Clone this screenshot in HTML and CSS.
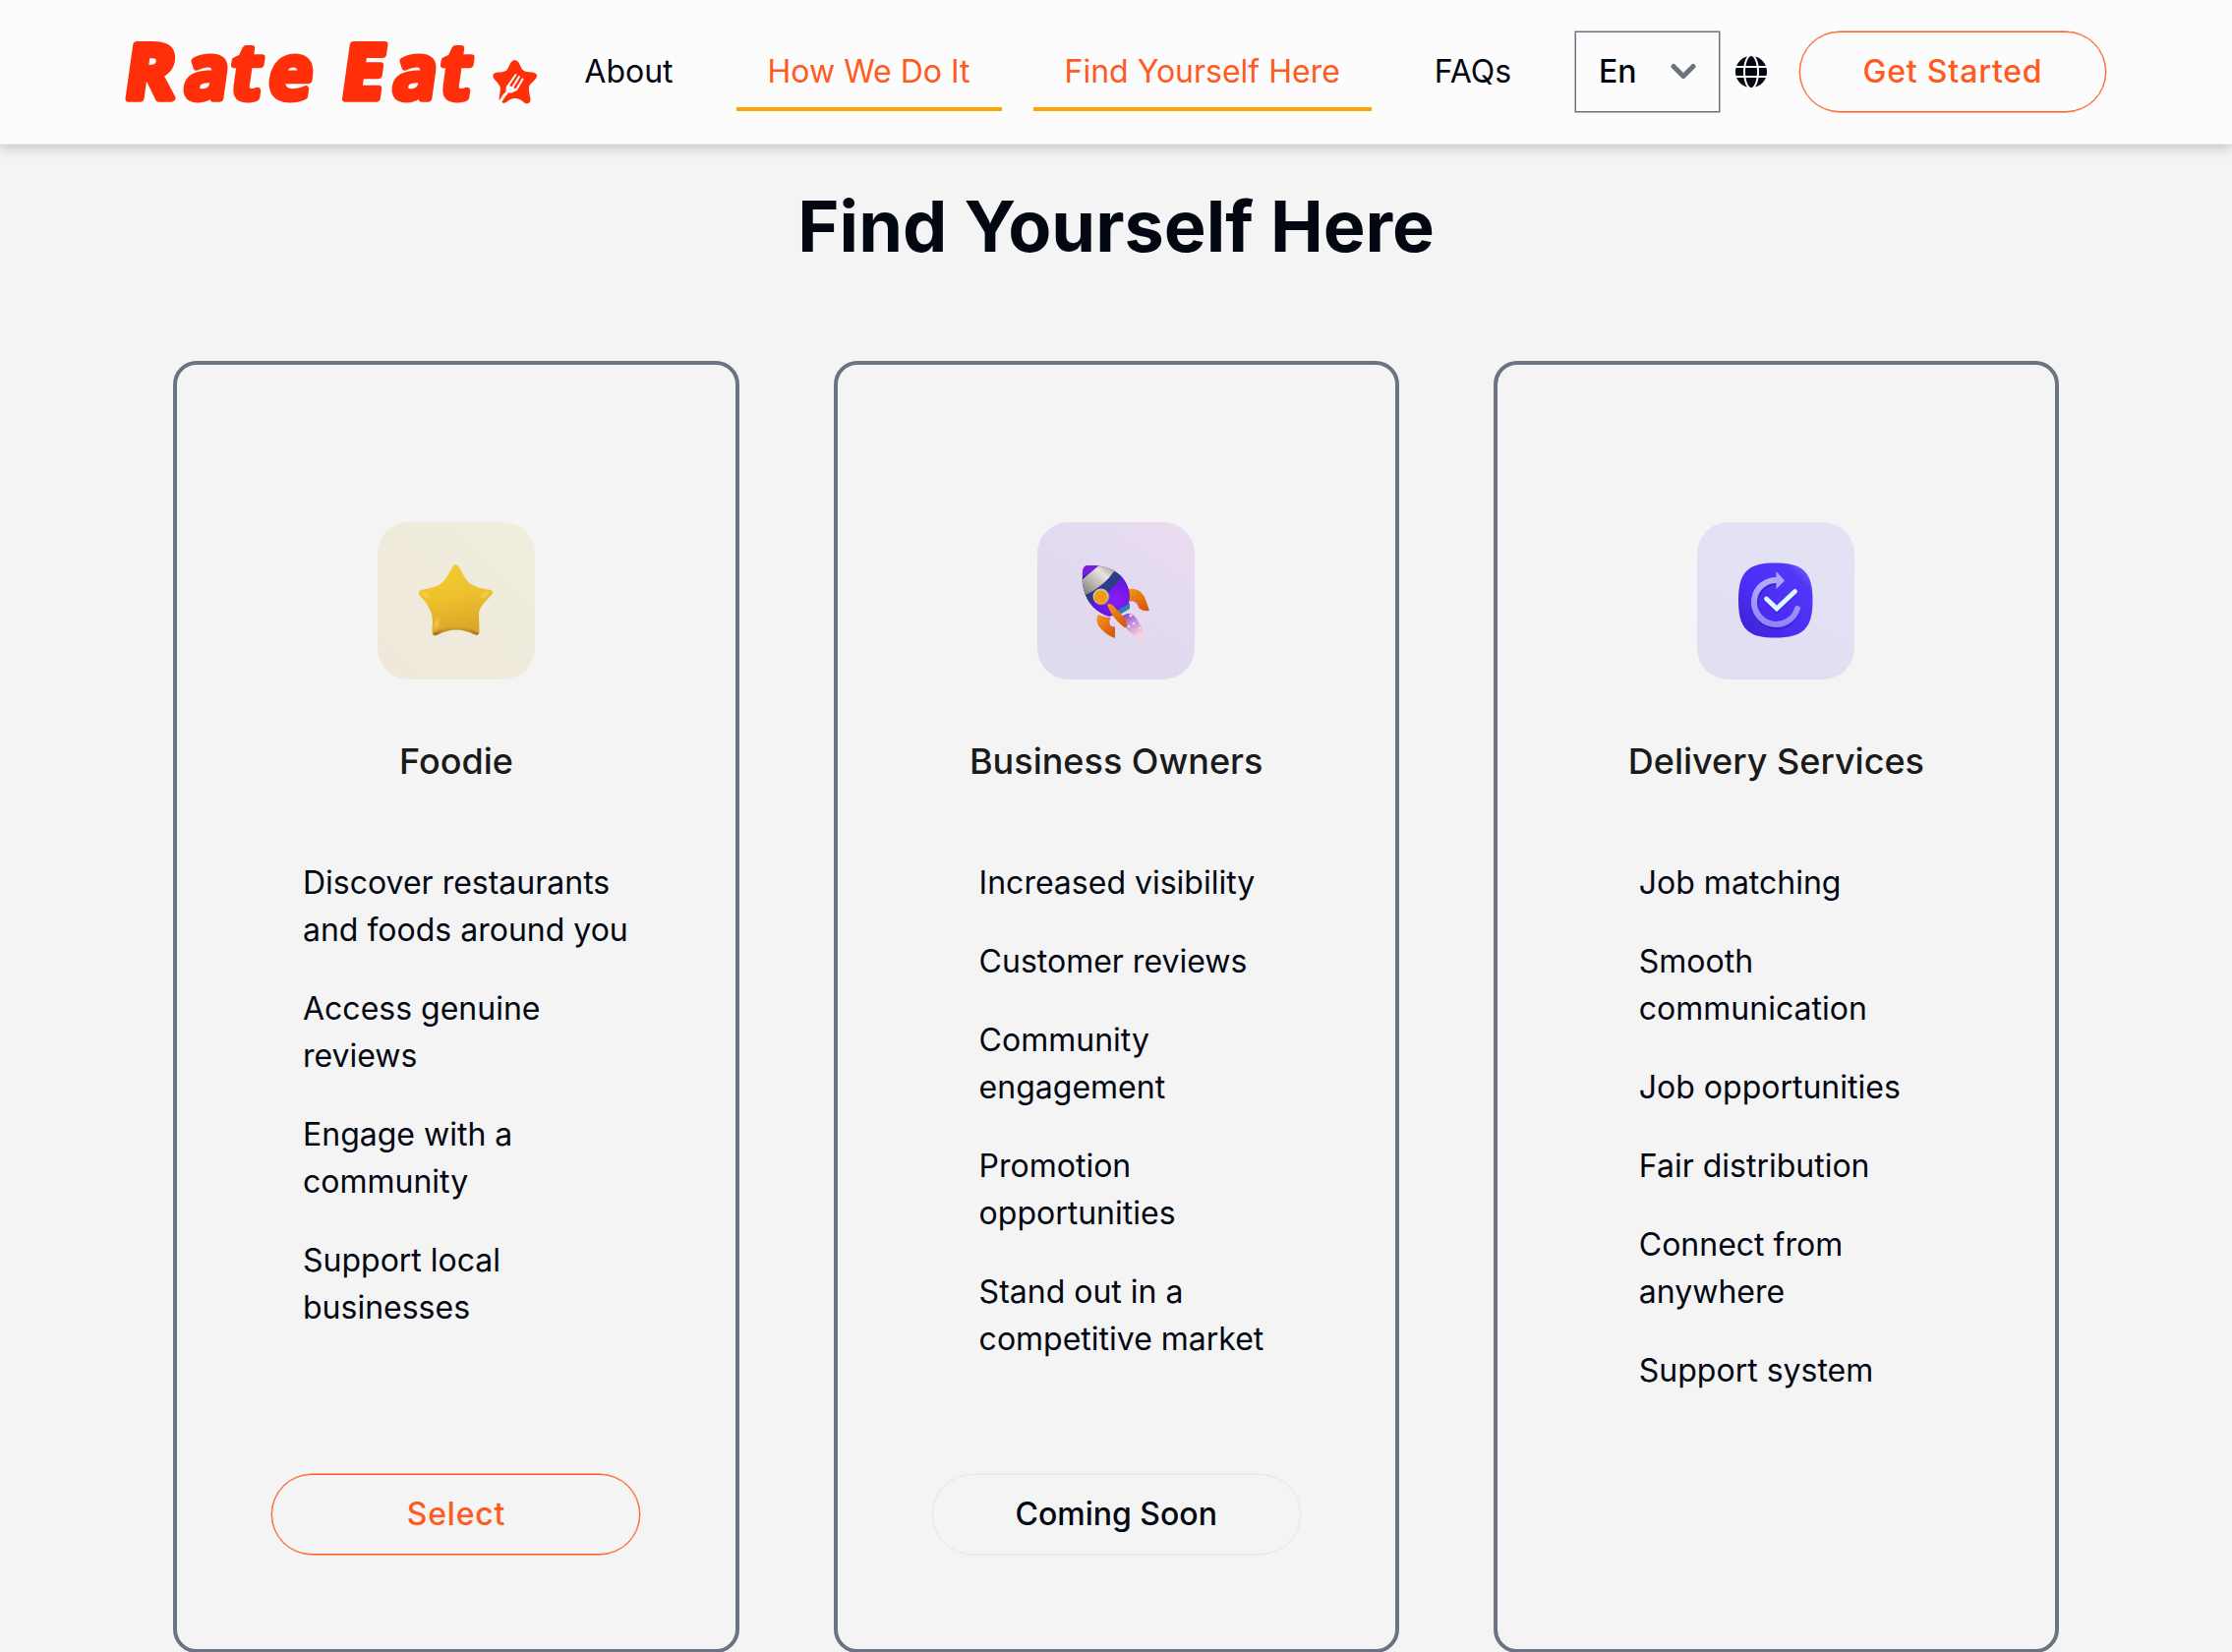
FILE: index.html
```html
<!DOCTYPE html>
<html lang="en">
<head>
<meta charset="utf-8">
<title>Rate Eat</title>
<link rel="stylesheet" href="styles.css">
</head>
<body>
<header class="header">
  <svg class="logo" width="426" height="120" viewBox="0 -15.500 426 120" role="img" aria-label="Rate Eat">
    <g class="logo-word">
      <text transform="translate(0 71) skewX(-8)" x="1.500 62.500 109.500 148"><tspan class="logo-cap">R</tspan>ate</text>
      <text transform="translate(0 71) skewX(-8)" x="222 274.500 322.500"><tspan class="logo-cap">E</tspan>at</text>
    </g>
    <path class="logo-star" d="M396.500 35 Q400.500 30 404.500 35 L408 42 Q410 45 418 45 Q426 46.500 421.500 52 L416 57.500 Q413.500 60 416.500 72 Q416.500 78 411 76.500 Q401 67 392 75.500 L389 76.500 L384.500 73 L386 61 Q385 57 380 52.500 Q375.500 46 383 45 Q391 45 393 42Z"/>
    <g class="logo-fork">
      <path d="M401.500 47.500 L393 60 M405 49.500 L398.500 60 M408.500 52 L402 63"/>
      <path class="fork-stem" d="M394 62 Q393 66 389.500 69 L385.500 75.500"/>
      <path class="fork-head" d="M393 57.500 Q390 63 393 65.500 Q399 67 403 62.500Z"/>
    </g>
  </svg>
  <nav class="nav">
    <a class="nav-link">About</a>
    <a class="nav-link active">How We Do It</a>
    <a class="nav-link active">Find Yourself Here</a>
    <a class="nav-link">FAQs</a>
  </nav>
  <div class="lang">
    <span>En</span>
    <svg width="26" height="18" viewBox="0 0 26 18"><path d="M3 3.500 L13 13.500 L23 3.500" fill="none" stroke="#6b7280" stroke-width="5" stroke-linecap="round" stroke-linejoin="round"/></svg>
  </div>
  <svg class="globe" width="32" height="32" viewBox="0 0 512 512"><path fill="#030712" d="M352 256c0 22.200-1.200 43.600-3.300 64H163.300c-2.200-20.400-3.300-41.800-3.300-64s1.200-43.600 3.300-64H348.700c2.200 20.400 3.300 41.800 3.300 64zm28.800-64H503.900c5.300 20.500 8.100 41.900 8.100 64s-2.800 43.500-8.100 64H380.800c2.100-20.600 3.200-42 3.200-64s-1.100-43.400-3.200-64zm112.600-32H376.700c-10-63.900-29.800-117.400-55.300-151.600c78.300 20.700 142 77.500 171.900 151.600zm-149.100 0H167.700c6.100-36.400 15.500-68.600 27-94.700c10.500-23.600 22.200-40.700 33.500-51.500C239.400 3.200 248.700 0 256 0s16.600 3.200 27.800 13.800c11.300 10.800 23 27.900 33.500 51.500c11.600 26 20.900 58.200 27 94.700zm-209 0H18.600C48.600 85.900 112.200 29.100 190.600 8.400C165.100 42.600 145.300 96.100 135.300 160zM8.100 192H131.200c-2.100 20.600-3.200 42-3.200 64s1.100 43.400 3.200 64H8.100C2.800 299.500 0 278.100 0 256s2.800-43.500 8.100-64zM194.700 446.600c-11.600-26-20.900-58.200-27-94.600H344.300c-6.100 36.400-15.500 68.600-27 94.600c-10.500 23.600-22.200 40.700-33.500 51.500C272.600 508.800 263.300 512 256 512s-16.600-3.200-27.800-13.800c-11.300-10.800-23-27.900-33.500-51.500zM135.300 352c10 63.900 29.800 117.400 55.300 151.600C112.200 482.900 48.600 426.100 18.600 352H135.300zm358.100 0c-30 74.100-93.600 130.900-171.900 151.600c25.500-34.200 45.200-87.700 55.300-151.600H493.400z"/></svg>
  <button class="btn btn-start">Get Started</button>
</header>

<main class="main">
  <h1 class="heading">Find Yourself Here</h1>
  <div class="cards">
    <section class="card">
      <div class="tile tile-star">
        <svg width="160" height="160" viewBox="0 0 160 160">
          <defs>
            <linearGradient id="gold" x1="0" y1="0" x2="0.200" y2="1"><stop offset="0" stop-color="#f5cd35"/><stop offset=".55" stop-color="#edbf2d"/><stop offset="1" stop-color="#d9a728"/></linearGradient>
            <radialGradient id="gleam"><stop offset="0" stop-color="#fbe07c" stop-opacity=".6"/><stop offset="1" stop-color="#f3c836" stop-opacity="0"/></radialGradient>
            <linearGradient id="underside" x1="0" y1="0" x2="0" y2="1"><stop offset="0" stop-color="#a87116" stop-opacity="0"/><stop offset="1" stop-color="#8b5a12" stop-opacity=".8"/></linearGradient>
          </defs>
          <path d="M76.500 45 Q79.500 41 82.500 45 C87 53 91 62 97 64 C102 67 109 68 115 69 Q119 71 116 74 C110 80 103 87 103 93 L103.500 112 Q103 116 98 114 C87 108 73 108 62 114 Q56 117 55.500 112 C55.500 105 57 97 54 91 C51 83 47 79 43 75 Q40 70 45 69 C53 67 62 66 67 60 C71 56 73 51 76.500 45Z" fill="url(#gold)"/>
          <ellipse cx="49" cy="74" rx="9" ry="4" transform="rotate(35 49 74)" fill="url(#gleam)"/>
          <ellipse cx="109" cy="74" rx="9" ry="4" transform="rotate(-35 109 74)" fill="url(#gleam)"/>
          <ellipse cx="60" cy="103" rx="4" ry="10" transform="rotate(20 60 103)" fill="url(#gleam)"/>
          <path d="M56 113 C70 104 90 104 103 113 Q103 116 98 114 C87 108 73 108 62 114 Q57 117 56 113Z" fill="url(#underside)"/>
        </svg>
      </div>
      <h2 class="card-title">Foodie</h2>
      <ul class="list list-foodie">
        <li>Discover restaurants<br>and foods around you</li>
        <li>Access genuine<br>reviews</li>
        <li>Engage with a<br>community</li>
        <li>Support local<br>businesses</li>
      </ul>
      <button class="btn btn-card">Select</button>
    </section>

    <section class="card">
      <div class="tile tile-rocket">
        <svg width="160" height="160" viewBox="0 0 160 160">
          <defs>
            <radialGradient id="hull" cx=".62" cy=".6" r=".6"><stop offset="0" stop-color="#8a1df5"/><stop offset=".6" stop-color="#6213dc"/><stop offset="1" stop-color="#31109a"/></radialGradient>
            <linearGradient id="silver" x1="0" y1="1" x2="1" y2="0"><stop offset="0" stop-color="#6f6963"/><stop offset=".35" stop-color="#b5b0aa"/><stop offset=".65" stop-color="#e6e4df"/><stop offset="1" stop-color="#8b8068"/></linearGradient>
            <linearGradient id="fin" x1="0" y1="0" x2=".6" y2="1"><stop offset="0" stop-color="#f39a18"/><stop offset="1" stop-color="#d95a08"/></linearGradient>
            <linearGradient id="plume" x1="0" y1="0" x2=".6" y2="1"><stop offset="0" stop-color="#7b3dc4"/><stop offset=".5" stop-color="#c391dc"/><stop offset="1" stop-color="#f7d3dc"/></linearGradient>
            <clipPath id="body"><path d="M46 55 Q45 45 51 44 Q70 43 82 52 C91 59 96 71 93 82 L92 86 Q82 94 73 96 C61 93 50 82 47 68 Q45 61 46 55Z"/></clipPath>
          </defs>
          <path d="M87 95 C96 89 101 97 105 105 Q110 113 109 118 Q105 120 98 115 C91 110 87 103 85 98Z" fill="url(#plume)"/>
          <g fill="#ffd0f4"><circle cx="95" cy="95" r="1.500"/><circle cx="98" cy="103" r="1.300"/><circle cx="93" cy="106" r="1.300"/><circle cx="104" cy="108" r="1.200"/><circle cx="103" cy="115" r="1.600"/><circle cx="106" cy="99" r="1.200"/><circle cx="114" cy="116" r="2"/></g>
          <path d="M62 94 Q68 97 74 97 Q70 106 79 107 L79 118 Q68 114 62 105 Q59 98 62 94Z" fill="url(#fin)"/>
          <path d="M91 68 Q104 66 109 76 L114 90 Q108 91 104 88 Q101 78 93 80Z" fill="url(#fin)"/>
          <path d="M74 97 Q70 106 79 107" fill="none" stroke="#e652aa"/>
          <path d="M93 80 Q101 78 104 88" fill="none" stroke="#e652aa"/>
          <g clip-path="url(#body)">
            <path d="M40 40H105V105H40Z" fill="url(#hull)"/>
            <path d="M44 76 L44 60 L62 44 L84 46 L77 52 Q70 62 48 76Z" fill="url(#silver)"/>
            <path d="M42 42H65L59 47 Q53 53 45 56Z" fill="#7620dd"/>
            <path d="M47 75 Q68 66 78 50 L86 55 Q77 71 51 83Z" fill="#293e87"/>
          </g>
          <path d="M81 90 L94 82 L94 88 L84 94Z" fill="#357bba"/>
          <circle cx="65" cy="76" r="8.500" fill="#8d8175"/><circle cx="64.500" cy="75.500" r="7.800" fill="#d5c5b4"/><circle cx="64.500" cy="76" r="6.600" fill="#f19a12"/>
          <path d="M71 84 Q74 81 80 88 Q92 99 91 106 Q90 109 86 105 Q76 97 71 84Z" fill="url(#fin)"/>
        </svg>
      </div>
      <h2 class="card-title">Business Owners</h2>
      <ul class="list list-business">
        <li>Increased visibility</li>
        <li>Customer reviews</li>
        <li>Community<br>engagement</li>
        <li>Promotion<br>opportunities</li>
        <li>Stand out in a<br>competitive market</li>
      </ul>
      <button class="btn btn-card btn-soon">Coming Soon</button>
    </section>

    <section class="card">
      <div class="tile tile-delivery">
        <svg width="160" height="160" viewBox="0 0 160 160">
          <defs>
            <linearGradient id="badge" x1="1" y1="0" x2="0" y2="1"><stop offset="0" stop-color="#7773fb"/><stop offset=".2" stop-color="#5237fa"/><stop offset=".65" stop-color="#4a2bf3"/><stop offset="1" stop-color="#3a20c8"/></linearGradient>
            <linearGradient id="ring" x1="0" y1="0" x2="0" y2="1"><stop offset="0" stop-color="#b0acfa"/><stop offset="1" stop-color="#9284fb"/></linearGradient>
          </defs>
          <path d="M79.500 41.500 C108 41.500 117.500 51 117.500 79.500 S108 117.500 79.500 117.500 S42 108 42 79.500 S51 41.500 79.500 41.500Z" fill="url(#badge)"/>
          <path d="M80 59.500 A22 22.500 0 1 0 102 88" transform="translate(0 1.500)" fill="none" stroke="#321bb0" stroke-opacity=".55" stroke-width="6.500" stroke-linecap="round"/>
          <path d="M82 59 A22.500 22.500 0 1 0 102 88" fill="none" stroke="url(#ring)" stroke-width="6" stroke-linecap="round"/>
          <path d="M80.500 50 L89 59.500 L80.500 68Z" fill="#aaa5fa"/>
          <path d="M70.500 78 L81 88 L99.500 70.500" transform="translate(0 1.500)" fill="none" stroke="#3219b8" stroke-opacity=".5" stroke-width="5"/>
          <path d="M70.500 78 L81 88 L99.500 70.500" fill="none" stroke="#dcf6ff" stroke-width="4.800" stroke-linecap="round"/>
        </svg>
      </div>
      <h2 class="card-title">Delivery Services</h2>
      <ul class="list list-delivery">
        <li>Job matching</li>
        <li>Smooth<br>communication</li>
        <li>Job opportunities</li>
        <li>Fair distribution</li>
        <li>Connect from<br>anywhere</li>
        <li>Support system</li>
      </ul>
    </section>
  </div>
</main>
</body>
</html>
```

FILE: styles.css
```css
* { box-sizing: border-box; }

body {
  margin: 0;
  height: 1680px;
  overflow: hidden;
  background: #f4f4f4;
  color: #030712;
  font-family: Inter, sans-serif;
  font-size: 32px;
  line-height: 48px;
}

.header {
  position: relative;
  display: flex;
  align-items: center;
  height: 147px;
  padding: 0 128px 0 123px;
  border-bottom: 1px solid #ececec;
  background: #fcfcfc;
  box-shadow: 0 3px 12px rgba(0, 0, 0, 0.21);
}

.logo { flex: none; overflow: visible; }

.logo-word {
  font-family: "Open Sans", sans-serif;
  font-size: 76px;
  font-weight: 600;
  fill: #ff2f09;
  stroke: #ff2f09;
  stroke-width: 7.5px;
  stroke-linejoin: round;
}

.logo-cap { font-weight: 700; }

.logo-star { fill: #ff2f09; }

.logo-fork {
  fill: none;
  stroke: #fcfcfc;
  stroke-width: 2px;
  stroke-linecap: round;
}

.logo-fork .fork-stem { stroke-width: 3px; }
.logo-fork .fork-head { fill: #fcfcfc; stroke: none; }

.nav {
  display: flex;
  flex: none;
  height: 81px;
  margin: 0 0 1px 14.3px;
  gap: 32px;
}

.nav-link {
  padding: 17px 32px 0;
  white-space: nowrap;
  border-bottom: 4px solid transparent;
}

.nav-link:first-child { padding-left: 31px; }

.active {
  color: #ff5a1f;
  border-bottom-color: #ffa500;
}

.lang {
  display: flex;
  flex: none;
  align-items: center;
  justify-content: space-between;
  width: 147px;
  height: 82px;
  margin-left: auto;
  padding: 0 23px;
  border: 1px solid #6b7280;
  box-shadow: 0 0 0 0.5px #6b7280;
  font-weight: 500;
}

.globe { flex: none; margin: 0 33px 0 16px; }

.btn {
  flex: none;
  height: 82px;
  padding: 0;
  border: 1px solid #ff5a1f;
  border-radius: 41px;
  box-shadow: 0 0 0 0.4px #ff5a1f;
  background: transparent;
  color: #ff5a1f;
  font: 500 32px/48px Inter, sans-serif;
  letter-spacing: 0.8px;
}

.btn-start { width: 312px; }

.main { padding: 43px 176px 0 176.4px; }

.heading {
  margin: 0;
  font-size: 72px;
  font-weight: 700;
  line-height: 80px;
  text-align: center;
}

.cards {
  display: grid;
  grid-template-columns: repeat(3, 1fr);
  gap: 96px;
  margin-top: 97px;
}

.card {
  display: flex;
  flex-direction: column;
  align-items: center;
  height: 1314px;
  padding: 160px 96px 96px;
  border: 4px solid #6b7280;
  border-radius: 24px;
}

.tile {
  flex: none;
  width: 160px;
  height: 160px;
  border-radius: 32px;
}

.tile svg { display: block; }
.tile-star { background: linear-gradient(225deg, #f0eedd, #efe8db); }
.tile-rocket { background: linear-gradient(215deg, #ebdcf1, #e2daef 40%, #dfdaee); }
.tile-delivery { background: linear-gradient(200deg, #e3e2f5, #e2def1); }

.card-title {
  margin: 55px 0 0;
  color: #1a1a1a;
  font-size: 36px;
  font-weight: 500;
  line-height: 56px;
}

.list {
  display: flex;
  flex-direction: column;
  align-self: stretch;
  gap: 32px;
  margin: 72px 0 0;
  padding: 0;
  list-style: none;
  white-space: nowrap;
}

.list-foodie { padding-left: 31.6px; }
.list-business,
.list-delivery { padding-left: 48px; }

.btn-card { width: 375px; margin-top: auto; }

.btn-soon {
  border-color: #e5e7eb;
  box-shadow: 0 0 0 0.4px #e5e7eb;
  color: #030712;
  letter-spacing: 0;
}
```
